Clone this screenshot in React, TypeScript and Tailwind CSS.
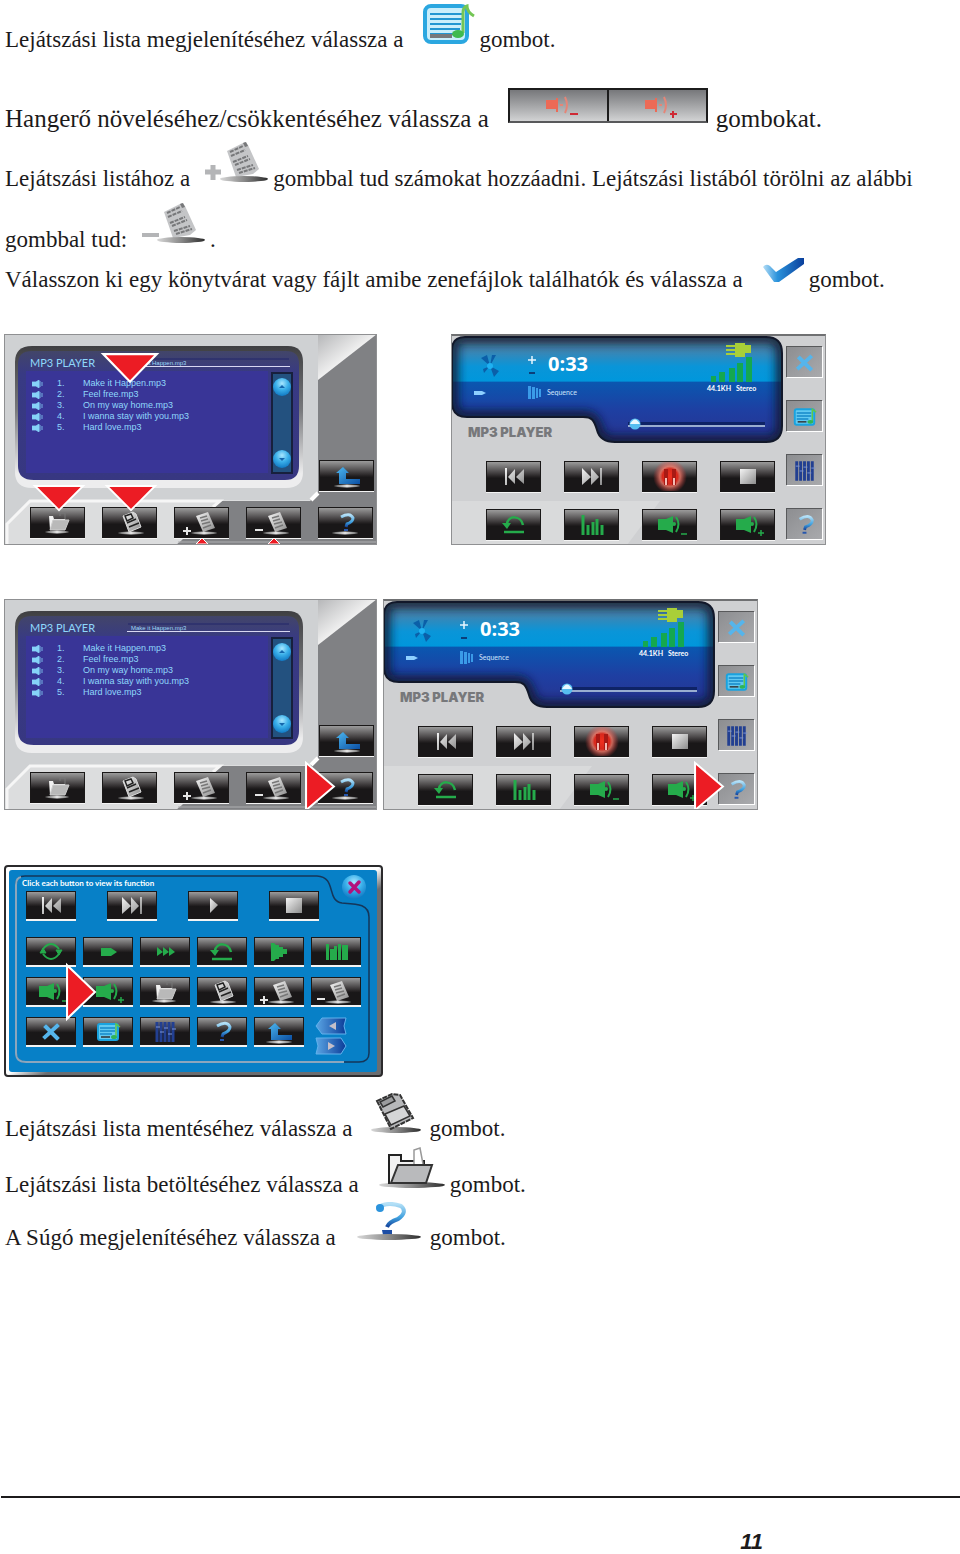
import type { ReactNode } from "react";
import clsx from "clsx";

const TRACKS = [
  "Make it Happen.mp3",
  "Feel free.mp3",
  "On my way home.mp3",
  "I wanna stay with you.mp3",
  "Hard love.mp3",
];

type GlyphName =
  | "prev" | "next" | "play" | "pause" | "stop"
  | "repeat" | "levels" | "volDown" | "volUp"
  | "loop" | "single" | "all" | "fade" | "blocks"
  | "folder" | "disk" | "pageAdd" | "pageRemove"
  | "close" | "list" | "eq" | "help" | "question" | "back";

const LABELS: Record<GlyphName, string> = {
  prev: "Előző", next: "Következő", play: "Lejátszás", pause: "Szünet", stop: "Leállítás",
  repeat: "Ismétlés", levels: "Szintek", volDown: "Hangerő le", volUp: "Hangerő fel",
  loop: "Újra", single: "Egy szám", all: "Összes", fade: "Halkítás", blocks: "Oszlopok",
  folder: "Lista betöltése", disk: "Lista mentése", pageAdd: "Hozzáadás", pageRemove: "Törlés",
  close: "Bezárás", list: "Lejátszási lista", eq: "Hangszínszabályzó", help: "Súgó", question: "Súgó",
  back: "Vissza",
};

const DISPLAY_PATH =
  "M14 3H315Q331 3 331 19V92Q331 108 315 108H164Q149 108 146 96C143 86 141 83 132 83H16Q1 83 1 68V16Q1 3 14 3Z";

// shared gradients, referenced by every drawing on the page
function SharedDefs() {
  return (
    <svg width="0" height="0" className="absolute" aria-hidden="true">
      <defs>
        <linearGradient id="silver" x1="0" y1="0" x2="1" y2="1">
          <stop offset="0" stopColor="#f4f4f4" />
          <stop offset="1" stopColor="#8c8c8c" />
        </linearGradient>
        <linearGradient id="shade" x1="0" y1="0" x2="1" y2="0">
          <stop offset="0" stopColor="#d8d8d8" />
          <stop offset=".5" stopColor="#8a8a8a" />
          <stop offset="1" stopColor="#2c2c2c" />
        </linearGradient>
        <linearGradient id="base" x1="0" y1="0" x2="1" y2="0">
          <stop offset="0" stopColor="#555" />
          <stop offset=".5" stopColor="#e6e6e6" />
          <stop offset="1" stopColor="#666" />
        </linearGradient>
        <linearGradient id="blueArrow" x1="0" y1="0" x2="1" y2="1">
          <stop offset="0" stopColor="#4db8f0" />
          <stop offset="1" stopColor="#0b4fa3" />
        </linearGradient>
        <linearGradient id="tick" x1="0" y1="0" x2="1" y2="0">
          <stop offset="0" stopColor="#b5def6" />
          <stop offset=".35" stopColor="#2a93dc" />
          <stop offset="1" stopColor="#0a3f9c" />
        </linearGradient>
        <linearGradient id="question" x1="0" y1="0" x2="0" y2="1">
          <stop offset="0" stopColor="#b4e0f7" />
          <stop offset=".6" stopColor="#3fa0de" />
          <stop offset="1" stopColor="#12419a" />
        </linearGradient>
        <linearGradient id="corner" x1="0" y1="0" x2="1" y2="1">
          <stop offset="0" stopColor="#b5b6b8" />
          <stop offset=".5" stopColor="#f0f0f0" />
        </linearGradient>
        <linearGradient id="frame" x1="0" y1="0" x2="0" y2="1">
          <stop offset="0" stopColor="#3f3f42" />
          <stop offset=".45" stopColor="#77787b" />
          <stop offset=".9" stopColor="#ededee" />
        </linearGradient>
        <linearGradient id="navy" x1="0" y1="0" x2="0" y2="1">
          <stop offset="0" stopColor="#424569" />
          <stop offset=".18" stopColor="#383a84" />
          <stop offset="1" stopColor="#373781" />
        </linearGradient>
        <linearGradient id="display" x1="0" y1="0" x2="0" y2="1">
          <stop offset="0" stopColor="#5b7f98" />
          <stop offset=".14" stopColor="#3a86b5" />
          <stop offset=".28" stopColor="#0a95d8" />
          <stop offset=".42" stopColor="#0097dc" />
          <stop offset=".43" stopColor="#0a57b0" />
          <stop offset=".7" stopColor="#1e3fa2" />
          <stop offset="1" stopColor="#28338f" />
        </linearGradient>
        <radialGradient id="ball" cx=".5" cy=".3" r=".7">
          <stop offset="0" stopColor="#a8e6ff" />
          <stop offset=".5" stopColor="#3bb0ea" />
          <stop offset="1" stopColor="#1179c4" />
        </radialGradient>
        <radialGradient id="glow">
          <stop offset="0" stopColor="#f0301f" />
          <stop offset=".45" stopColor="#d8281c" />
          <stop offset=".6" stopColor="#f07a6a" stopOpacity=".8" />
          <stop offset="1" stopColor="#c33" stopOpacity="0" />
        </radialGradient>
        <linearGradient id="tab" x1="0" y1="0" x2="1" y2="0">
          <stop offset="0" stopColor="#5aa5e4" />
          <stop offset="1" stopColor="#0b3c98" />
        </linearGradient>
        <filter id="soft" x="-10%" y="-10%" width="120%" height="120%">
          <feGaussianBlur stdDeviation="5" />
        </filter>
        <clipPath id="displayClip">
          <path d={DISPLAY_PATH} />
        </clipPath>
      </defs>
    </svg>
  );
}

function Speaker({ sign }: { sign: "minus" | "plus" }) {
  return (
    <>
      <path d="M8 9h8l7-3v17l-7-3H8z" fill="#25ab4b" />
      <circle cx="24" cy="14" r="2" fill="#25ab4b" />
      <path d="M26 7q5 7 0 15" stroke="#25ab4b" strokeWidth="2" fill="none" />
      <path d={sign === "plus" ? "M30 23h6M33 20v6" : "M31 24h6"} stroke="#25ab4b" strokeWidth="1.500" />
    </>
  );
}

function Page() {
  return (
    <g>
      <path d="M14 8 26 4l7 16-12 4z" fill="url(#silver)" />
      <path d="m18 10 7-2m-6 5 7-2m-6 5 8-2m-7 6 8-3" stroke="#777" strokeWidth="1.500" />
      <ellipse cx="22" cy="25" rx="13" ry="1.500" fill="url(#base)" />
    </g>
  );
}

const GLYPHS: Record<GlyphName, ReactNode> = {
  prev: <path d="M11 6h2v17h-2zM21 7v15l-7-7zM30 7v15l-8-7z" fill="url(#silver)" />,
  next: <path d="M10 6v17l9-8zM19 6v17l8-8zM28 6h2v17h-2z" fill="url(#silver)" />,
  play: <path d="M17 7v15l8-8z" fill="url(#silver)" />,
  pause: (
    <>
      <circle cx="20" cy="14.500" r="17" fill="url(#glow)" />
      <path d="M14 7h4v16h-4zM22 7h4v16h-4z" fill="#a81914" />
      <path d="M15 16h2v7h-2zM23 16h2v7h-2z" fill="#f4bcb4" />
    </>
  ),
  stop: <path d="M12 7h16v15H12z" fill="url(#silver)" />,
  repeat: (
    <>
      <path d="M29 15C27 5 14 5 13 14" stroke="#25ab4b" strokeWidth="2.500" fill="none" />
      <path d="M8 13h9l-4 6z" fill="#25ab4b" />
      <path d="M10 22h20" stroke="#25ab4b" strokeWidth="2.500" />
    </>
  ),
  levels: (
    <path d="M11 5v20M16 15v10M21 12v13M25 9v16M30 15v10" stroke="#25ab4b" strokeWidth="3" />
  ),
  volDown: <Speaker sign="minus" />,
  volUp: <Speaker sign="plus" />,
  loop: (
    <g stroke="#25ab4b" strokeWidth="2" fill="none">
      <path d="M12 12q8-10 16 0M28 17q-8 10-16 0" />
      <path d="m9 16 3-5 3 5zM25 13l3 5 3-5z" fill="#25ab4b" strokeWidth="1" />
    </g>
  ),
  single: <path d="M13 11h10l6 4-6 4H13z" fill="#25ab4b" />,
  all: <path d="M12 10v9l6-4zM18 10v9l6-4zM24 10v9l6-4z" fill="#25ab4b" />,
  fade: <path d="M12 6h3l2 2h3v2h4v2h4v5h-4v3h-4v2h-3l-2 2h-3z" fill="#25ab4b" />,
  blocks: <path d="M10 7h3v16h-3zM14 12h6v11h-6zM18 9h3v14h-3zM22 7h3v16h-3zM26 8h6v15h-6z" fill="#25ab4b" />,
  folder: (
    <>
      <path d="M22 8V5h5v7" fill="none" stroke="#777" />
      <path d="M11 8h4l1 3h11v11H12z" fill="#f1f1f1" />
      <path d="M15 12h16l-4 10H12z" fill="#b9b9b9" stroke="#ccc" />
      <ellipse cx="19" cy="24" rx="12" ry="1.500" fill="url(#base)" />
    </>
  ),
  disk: (
    <>
      <path d="m13 8 10-4 3 2 5 13-12 5z" fill="url(#silver)" stroke="#ddd" />
      <path d="m15 8 6-2 2 4-6 3zM17 15l9-4M19 19l10-4" fill="none" stroke="#222" strokeWidth="1.500" />
      <ellipse cx="21" cy="25" rx="13" ry="1.500" fill="url(#base)" />
    </>
  ),
  pageAdd: (
    <>
      <Page />
      <path d="M1 23h8M5 19v8" stroke="#e6e6e6" strokeWidth="2" />
    </>
  ),
  pageRemove: (
    <>
      <Page />
      <path d="M1 22h8" stroke="#e6e6e6" strokeWidth="2" />
    </>
  ),
  close: <path d="M15 10 26 21M26 9 14 20" stroke="#55b5ec" strokeWidth="4" strokeLinecap="square" />,
  list: (
    <>
      <rect x="10" y="7" width="20" height="16" rx="2" fill="#62c9f1" stroke="#19a3df" strokeWidth="2" />
      <path d="M12 11h15M12 14h15M12 17h12" stroke="#1689c9" strokeWidth="1.500" />
      <path d="M13 20h9" stroke="#333" strokeWidth="1.500" />
      <path d="M28 19V7l4 3" stroke="#5fc847" strokeWidth="1.500" fill="none" />
      <ellipse cx="26" cy="20" rx="3" ry="2" fill="#2fb457" />
    </>
  ),
  eq: (
    <>
      <path d="M12 5v20M16 5v20M20 5v20M24 5v20M28 5v20" stroke="#223f91" strokeWidth="3" />
      <path d="M11 10h4m0 5h4m0-4h4m0 6h4m0-5h4" stroke="#7a94d6" />
    </>
  ),
  question: (
    <>
      <path d="M15 9Q25 3 28 10Q28 14 21 17L20 20" stroke="url(#question)" strokeWidth="3" fill="none" />
      <path d="M18 22h4v2h-4z" fill="#2757ad" />
    </>
  ),
  help: (
    <>
      <path d="M15 9Q24 4 27 10Q27 14 21 16L20 19" stroke="url(#question)" strokeWidth="3" fill="none" />
      <path d="M18 21h4v2h-4z" fill="#2757ad" />
      <ellipse cx="19" cy="25" rx="13" ry="1.500" fill="url(#base)" />
    </>
  ),
  back: (
    <>
      <path d="m16 6 6 6h-3v6h14v5H12V12H9z" fill="url(#blueArrow)" />
      <ellipse cx="20" cy="25" rx="13" ry="1.500" fill="url(#base)" />
    </>
  ),
};

function Key({ name, small }: { name: GlyphName; small?: boolean }) {
  return (
    <button
      type="button"
      aria-label={LABELS[name]}
      className={clsx(
        "flex shrink-0 items-center justify-center overflow-hidden border border-[#1a1818] bg-[linear-gradient(180deg,#9b9b9b_0%,#4a4748_35%,#262324_50%,#191718_56%,#191718_100%)]",
        small ? "h-[28px] w-[50px] shadow-[0_2px_0_#f4f4f4]" : "h-[31px] w-[55px] shadow-[0_1px_0_#f4f4f4]",
      )}
    >
      <svg width="40" height="29" viewBox="0 0 40 29">{GLYPHS[name]}</svg>
    </button>
  );
}

function SideKey({ name }: { name: GlyphName }) {
  return (
    <button
      type="button"
      aria-label={LABELS[name]}
      className="flex h-[31px] w-9 items-center justify-center overflow-hidden border-t border-l border-[#58595b] bg-linear-to-br from-[#8d8e91] to-[#a9aaad] shadow-[1px_1px_0_#fff]"
    >
      <svg width="36" height="29" viewBox="2 0 36 29">{GLYPHS[name]}</svg>
    </button>
  );
}

// red pointer laid over a figure
function Pointer({ dir, className }: { dir: "down" | "right"; className: string }) {
  return (
    <svg
      viewBox={dir === "down" ? "0 0 56 28" : "0 0 30 56"}
      preserveAspectRatio="none"
      className={clsx("pointer-events-none absolute", className)}
      aria-hidden="true"
    >
      <path
        d={dir === "down" ? "M3 1H53L28 26Z" : "M1 3V53L28 28Z"}
        fill="#ec1c24"
        stroke="#fff"
        strokeWidth="2"
      />
    </svg>
  );
}

function ListPlayer({ children }: { children?: ReactNode }) {
  return (
    <div className="relative isolate h-[211px] w-[373px] shrink-0 overflow-hidden border border-[#8f9092] bg-[#cfd1d3]">
      <svg width="371" height="209" viewBox="1 1 371 209" className="absolute inset-0 -z-10" aria-hidden="true">
        <path d="M3 211V189L26 166H314V211Z" fill="#dcddde" />
        <path d="M314 0H373V211H172L178 206L209 173L217 167H306L314 160Z" fill="#808184" />
        <path d="M314 0H373L314 46Z" fill="url(#corner)" />
        <path d="M3 211V190L26 167H216L209 173" fill="none" stroke="#f6f6f6" strokeWidth="3" />
        <path d="M307 166L314 159" stroke="#fff" strokeWidth="4" />
        <path d="M174 208H372" stroke="#b0b1b3" />
        <path d="M28 12H284Q299 12 299 28V138Q299 154 282 154H28Q11 154 11 138V28Q11 12 28 12Z" fill="url(#frame)" />
        <path d="M28 17H282Q295 17 295 30V132Q295 146 281 146H30Q14 146 14 132V30Q14 17 28 17Z" fill="url(#navy)" />
        <path d="M22 37H264V139H22Z" fill="#393597" />
        <path d="M124 25H285" stroke="#23266b" />
      </svg>
      <div className="flex h-[154px] flex-col pt-[18px] pl-[25px]">
        <div className="flex h-5 items-center">
          <h3 className="w-[97px] font-['Lato'] text-[11px] leading-5 text-[#8fd8fb]">MP3 PLAYER</h3>
          <div className="flex h-[7px] w-[163px] items-center border-b border-[#d8d8f2] pl-1">
            <span className="font-['Liberation_Sans'] text-[6px] leading-[6px] text-[#9fd9f8]">Make it Happen.mp3</span>
          </div>
        </div>
        <div className="flex">
          <ol className="w-[241px] pt-[5px] font-['Liberation_Sans'] text-[9px] leading-[11px] text-[#8fd8fb]">
            {TRACKS.map((track, i) => (
              <li key={track} className="flex items-center">
                <svg width="12" height="8" viewBox="0 0 12 8" className="ml-[2px]" aria-hidden="true">
                  <path d="M0 2h4l3-2v8L4 6H0zM8 1v6M10 2v4" fill="#86d3f8" stroke="#86d3f8" strokeWidth=".8" />
                </svg>
                <span className="ml-[13px] w-[26px]">{i + 1}.</span>
                <span>{track}</span>
              </li>
            ))}
          </ol>
          <div className="-mt-px flex h-[102px] w-[22px] flex-col items-center justify-between border-2 border-[#17203d] bg-[#23517f] py-1">
            {["Fel", "Le"].map((label) => (
              <button key={label} type="button" aria-label={label} className="h-[18px] w-[18px]">
                <svg width="18" height="18" viewBox="0 0 18 18">
                  <circle cx="9" cy="9" r="9" fill="url(#ball)" />
                  <path d={label === "Fel" ? "M6 10 9 7l3 3z" : "M6 8l3 3 3-3z"} fill="#1467ad" />
                </svg>
              </button>
            ))}
          </div>
        </div>
      </div>
      <div className="-mt-[29px] flex justify-end pr-[2px]">
        <Key name="back" />
      </div>
      <div className="mt-4 flex gap-[17px] pl-[25px]">
        <Key name="folder" />
        <Key name="disk" />
        <Key name="pageAdd" />
        <Key name="pageRemove" />
        <Key name="help" />
      </div>
      {children}
    </div>
  );
}

function Display() {
  return (
    <div className="h-[108px] w-[332px]">
      <div className="flex h-[46px]">
        <svg width="92" height="46" viewBox="0 0 92 46" aria-hidden="true">
          <g fill="#0b5fa8">
            <path d="M38 30 29 22l6-3zM38 30l2-11h4zM38 30l9 5-5 6zM38 30l-7 3 1 4z" />
          </g>
          <circle cx="38" cy="30" r="3" fill="#1fb1f2" />
          <path d="M76 24h8M80 20v8" stroke="#e8f6ff" strokeWidth="1.500" />
          <path d="M77 37h6" stroke="#0b3f7a" strokeWidth="2" />
        </svg>
        <span className="mt-[14px] w-[160px] pl-1 font-['Open_Sans'] text-[20px] leading-7 font-bold text-white">0:33</span>
        <svg width="60" height="48" viewBox="252 0 60 48" aria-hidden="true">
          <path d="M274 9h9v-2h10v2h6v8h-6v4h-10v-2h-9v-2h9v-2h-9v-2h9v-2h-9z" fill="#a9cf38" />
          <path d="M259 40h5v6h-5zM267 36h6v10h-6zM277 32h6v14h-6zM285 27h6v19h-6zM294 21h6v25h-6z" fill="#14a850" />
        </svg>
      </div>
      <div className="flex h-5 font-['Lato'] text-[7px] leading-5 text-[#cfe5fb]">
        <svg width="95" height="20" viewBox="0 0 95 20" aria-hidden="true">
          <path d="M22 9h8l4 2-4 2h-8z" fill="#8ed0ff" />
          <path d="M76 4h3v13h-3zM80 5h3v12h-3zM84 6h2v10h-2zM87 7h2v8h-2z" fill="#3a9be8" />
        </svg>
        <span className="w-40">Sequence</span>
        <span className="-mt-1 flex gap-[5px] font-bold text-white"><span>44.1KH</span><span>Stereo</span></span>
      </div>
      <svg width="332" height="42" viewBox="0 66 332 42" aria-hidden="true">
        <path d="M176 88.500H313" stroke="#0e2366" strokeWidth="5" />
        <path d="M176 90H313" stroke="#c8dcf4" strokeWidth="1.500" />
        <circle cx="183" cy="88" r="5.500" fill="#56bdf0" />
        <path d="M178 88q5-9 10 0z" fill="#e9f8ff" />
      </svg>
    </div>
  );
}

function TrackPlayer({ children }: { children?: ReactNode }) {
  return (
    <div className="relative isolate h-[211px] w-[375px] shrink-0 overflow-hidden border border-t-2 border-[#8f9092] border-t-[#6f7072] bg-[#cfd0d2]">
      <svg width="373" height="208" viewBox="1 2 373 208" className="absolute inset-0 -z-10" aria-hidden="true">
        <path d="M0 167H209L176 211H0Z" fill="#d9dadb" />
        <path d={DISPLAY_PATH} fill="url(#display)" />
        <g clipPath="url(#displayClip)">
          <path d={DISPLAY_PATH} fill="none" stroke="#101a30" strokeOpacity=".85" strokeWidth="13" filter="url(#soft)" />
        </g>
        <path d={DISPLAY_PATH} fill="none" stroke="#12182a" strokeWidth="2" />
      </svg>
      <div className="flex">
        <div className="w-[334px]">
          <Display />
          <h3 className="-mt-5 pl-4 font-['Inter'] text-[13px] leading-4 font-black text-[#77787b]">MP3 PLAYER</h3>
          <div className="mt-[21px] grid w-max grid-cols-4 gap-x-[23px] gap-y-[17px] pl-[34px]">
            <Key name="prev" />
            <Key name="next" />
            <Key name="pause" />
            <Key name="stop" />
            <Key name="repeat" />
            <Key name="levels" />
            <Key name="volDown" />
            <Key name="volUp" />
          </div>
        </div>
        <div className="flex flex-col gap-[23px] pt-[10px]">
          <SideKey name="close" />
          <SideKey name="list" />
          <SideKey name="eq" />
          <SideKey name="question" />
        </div>
      </div>
      {children}
    </div>
  );
}

const HELP_ROWS: GlyphName[][] = [
  ["loop", "single", "all", "repeat", "fade", "blocks"],
  ["volDown", "volUp", "folder", "disk", "pageAdd", "pageRemove"],
  ["close", "list", "eq", "question", "back"],
];

function HelpPanel() {
  return (
    <div className="relative isolate h-[212px] w-[379px] rounded-[4px] border-2 border-[#2b2a2c] bg-linear-to-br from-white from-50% to-[#6b6d70] to-55% p-[3px]">
      <svg width="379" height="212" viewBox="0 0 379 212" className="absolute -top-[2px] -left-[2px] -z-10" aria-hidden="true">
        <rect x="5" y="5" width="368" height="202" rx="3" fill="#0780c7" />
        <path d="M12 188V20Q12 11 21 11H313C333 12 322 36 338 38C353 39 365 39 365 52V188Q365 197 355 197H22Q12 197 12 188Z" fill="none" stroke="#15365a" strokeWidth="1.500" />
        <path d="M340 197H22Q12 197 12 188V20Q12 13 17 12" fill="none" stroke="#8ba6bd" strokeWidth="2" />
      </svg>
      <div className="flex h-[21px] items-start justify-between pl-[13px]">
        <h3 className="pt-[7px] font-['Lato'] text-[8px] leading-3 font-bold whitespace-nowrap text-white">Click each button to view its function</h3>
        <button type="button" aria-label="Bezárás" className="mt-[5px] mr-3 h-6 w-6">
          <svg width="24" height="24" viewBox="0 0 24 24">
            <circle cx="12" cy="12" r="12" fill="url(#ball)" />
            <path d="m8 8 9 9M17 7l-9 10" stroke="#b3127c" strokeWidth="3.500" strokeLinecap="round" />
          </svg>
        </button>
      </div>
      <div className="flex gap-[31px] pl-[17px]">
        <Key name="prev" small />
        <Key name="next" small />
        <Key name="play" small />
        <Key name="stop" small />
      </div>
      <div className="mt-[18px] flex flex-col gap-3 pl-[17px]">
        {HELP_ROWS.map((row) => (
          <div key={row[0]} className="flex h-7 gap-[7px]">
            {row.map((name) => (
              <Key key={name} name={name} small />
            ))}
            {row.length < 6 && (
              <div className="flex flex-col gap-[2px] pl-1">
                <button type="button" aria-label="Előző oldal" className="h-[18px] w-8">
                  <svg width="32" height="18" viewBox="0 0 32 18">
                    <path d="M7 1H31L29 9L31 17H7L1 9Z" fill="url(#tab)" stroke="#62b2ec" />
                    <path d="m14 9 7-4v8z" fill="#c5bfc9" />
                  </svg>
                </button>
                <button type="button" aria-label="Következő oldal" className="h-[18px] w-8">
                  <svg width="32" height="18" viewBox="0 0 32 18">
                    <path d="M1 1H26L31 9L26 17H1L3 9Z" fill="url(#tab)" stroke="#62b2ec" />
                    <path d="m20 9-7-4v8z" fill="#c5bfc9" />
                  </svg>
                </button>
              </div>
            )}
          </div>
        ))}
      </div>
      <Pointer dir="right" className="top-[95px] left-[60px] h-[60px] w-[31px]" />
    </div>
  );
}

function ListIcon() {
  return (
    <svg width="56" height="41" viewBox="0 0 56 41" role="img" aria-label="lejátszási lista">
      <rect x="3" y="3" width="42" height="36" rx="6" fill="#c9eefb" stroke="#2ba7e0" strokeWidth="4" />
      <path d="M8 11h32M8 16h32M8 21h31M8 26h30M8 31h28" stroke="#2196d2" strokeWidth="2" />
      <path d="M8 33h22" stroke="#77787a" strokeWidth="4" />
      <path d="M41 30V10q0-6 4-7 0 6 7 10" stroke="#74c655" strokeWidth="3" fill="none" />
      <ellipse cx="36" cy="31" rx="6" ry="4" fill="#3fba4f" />
    </svg>
  );
}

function SheetIcon({ add }: { add?: boolean }) {
  return (
    <svg width="64" height="42" viewBox="0 0 64 42" role="img" aria-label={add ? "hozzáadás" : "törlés"}>
      <path d="M22 10 40 1l3 3 11 24-6 5-17 3z" fill="#c4c5c7" />
      <path d="m25 11 13-6m-12 10 14-6m-12 12 15-6m-13 9 15-6m-13 11 16-5m-14 8 16-5" stroke="#77787a" strokeWidth="2" strokeDasharray="4 1" />
      <path d="m38 2 3-1 2 4-3 1z" fill="#77787a" />
      <ellipse cx="39" cy="38" rx="24" ry="3" fill="url(#shade)" />
      <path d={add ? "M0 31h16M8 24v15" : "M0 33h17"} stroke="#b4b5b7" strokeWidth={add ? 5 : 4} />
    </svg>
  );
}

function TickIcon() {
  return (
    <svg width="43" height="28" viewBox="0 0 43 28" role="img" aria-label="rendben">
      <path d="M1 11Q4 7 8 10L14 16L36 2H42V8L17 26H12Z" fill="url(#tick)" />
    </svg>
  );
}

function DiskIcon() {
  return (
    <svg width="50" height="41" viewBox="0 0 50 41" role="img" aria-label="mentés">
      <ellipse cx="25" cy="38" rx="25" ry="3" fill="url(#shade)" />
      <path d="M6 9 21 2l8 1 13 23-22 11z" fill="#b7b8ba" stroke="#333" strokeWidth="2" strokeDasharray="5 1" />
      <path d="m9 10 12-6 3 5-12 6z" fill="#9b9c9e" stroke="#333" strokeWidth="1.500" />
      <path d="m14 22 19-8 6 10-19 9z" fill="#d5d6d7" stroke="#333" strokeWidth="1.500" />
    </svg>
  );
}

function FolderIcon() {
  return (
    <svg width="68" height="42" viewBox="0 0 68 42" role="img" aria-label="betöltés">
      <ellipse cx="34" cy="38" rx="33" ry="3" fill="url(#shade)" />
      <path d="M11 37V8h12v6h23v5" fill="#f1f1f1" stroke="#222" strokeWidth="2" />
      <path d="M36 18V3l6-2 3 16" fill="#fff" stroke="#999" strokeWidth="1.500" />
      <path d="M20 18h34l-6 18H13z" fill="#b9babc" stroke="#333" strokeWidth="2" />
    </svg>
  );
}

function HelpIcon() {
  return (
    <svg width="65" height="40" viewBox="0 0 65 40" role="img" aria-label="súgó">
      <path d="M20 6Q30-1 44 4Q51 10 41 17Q32 20 30 25" fill="none" stroke="url(#question)" strokeWidth="4" />
      <circle cx="23" cy="6" r="4" fill="#2b93dc" />
      <path d="M25 28h10v5H26z" fill="#1c4da5" />
      <ellipse cx="32" cy="35" rx="32" ry="3" fill="url(#shade)" />
    </svg>
  );
}

function VolumeKeys() {
  return (
    <span className="flex h-[35px] w-[200px] divide-x-2 divide-[#1c1c1c] border-2 border-[#1c1c1c] border-b-[#58595b]">
      {["−", "+"].map((sign) => (
        <button
          key={sign}
          type="button"
          aria-label={`Hangerő ${sign}`}
          className="flex flex-1 items-center justify-center bg-linear-to-b from-[#77787b] to-[#d2d3d4] pl-2"
        >
          <svg width="36" height="24" viewBox="0 0 36 24">
            <path d="M2 6h10V4h2v14h-2v-3H2z" fill="#ec6a56" />
            <path d="M16 11h3M21 3q4 8 0 16" stroke="#e58577" strokeWidth="2" fill="none" />
            <path d={sign === "+" ? "M27 20h7M30 17v7" : "M26 20h8"} stroke="#cf2a35" strokeWidth="2" />
          </svg>
        </button>
      ))}
    </span>
  );
}

function Line({ className, children }: { className: string; children: ReactNode }) {
  return <div className={clsx("flex items-end pl-px whitespace-nowrap", className)}>{children}</div>;
}

export default function App() {
  return (
    <main className="w-full bg-white font-['Liberation_Serif',serif] text-[23px] leading-6 text-[#1c1a1b]">
      <SharedDefs />
      <div className="pl-1">
        <Line className="h-[52px]">
          <span>Lejátszási lista megjelenítéséhez válassza a</span>
          <span className="mr-px mb-2 ml-[19px]"><ListIcon /></span>
          <span>gombot.</span>
        </Line>
        <Line className="h-[79px] text-[25px]">
          <span>Hangerő növeléséhez/csökkentéséhez válassza a</span>
          <span className="mr-2 mb-2 ml-[19px]"><VolumeKeys /></span>
          <span>gombokat.</span>
        </Line>
        <Line className="h-[60px]">
          <span>Lejátszási listához a</span>
          <span className="mr-1 mb-2 ml-[15px]"><SheetIcon add /></span>
          <span>gombbal tud számokat hozzáadni. Lejátszási listából törölni az alábbi</span>
        </Line>
        <Line className="h-[61px]">
          <span>gombbal tud:</span>
          <span className="mr-1 mb-2 ml-[15px]"><SheetIcon /></span>
          <span>.</span>
        </Line>
        <Line className="h-10">
          <span>Válasszon ki egy könytvárat vagy fájlt amibe zenefájlok találhatók és válassza a</span>
          <span className="mr-1 mb-2 ml-[19px]"><TickIcon /></span>
          <span>gombot.</span>
        </Line>

        <div className="mt-[42px] flex gap-[74px]">
          <ListPlayer>
            <Pointer dir="down" className="top-[18px] left-[95px] h-[31px] w-[60px]" />
            <Pointer dir="down" className="top-[150px] left-[27px] h-[27px] w-[54px]" />
            <Pointer dir="down" className="top-[150px] left-[99px] h-[27px] w-[54px]" />
            <svg width="84" height="8" viewBox="0 0 84 8" className="absolute bottom-0 left-[191px]" aria-hidden="true">
              <path d="M0 8 6 2l6 6zM72 8l6-6 6 6z" fill="#ec1c24" stroke="#fff" />
            </svg>
          </ListPlayer>
          <TrackPlayer />
        </div>

        <div className="mt-[54px] flex gap-[6px]">
          <ListPlayer>
            <Pointer dir="right" className="top-[160px] left-[300px] h-[53px] w-[31px]" />
          </ListPlayer>
          <TrackPlayer>
            <Pointer dir="right" className="top-[159px] left-[310px] h-[53px] w-[31px]" />
          </TrackPlayer>
        </div>

        <div className="mt-[55px]">
          <HelpPanel />
        </div>

        <Line className="h-[64px]">
          <span>Lejátszási lista mentéséhez válassza a</span>
          <span className="mr-2 mb-2 ml-[19px]"><DiskIcon /></span>
          <span>gombot.</span>
        </Line>
        <Line className="h-14">
          <span>Lejátszási lista betöltéséhez válassza a</span>
          <span className="mr-1 mb-2 ml-[19px]"><FolderIcon /></span>
          <span>gombot.</span>
        </Line>
        <Line className="h-[53px]">
          <span>A Súgó megjelenítéséhez válassza a</span>
          <span className="mr-2 mb-2 ml-[21px]"><HelpIcon /></span>
          <span>gombot.</span>
        </Line>
      </div>

      <footer className="mt-[246px] ml-px border-t-2 border-[#1c1a1b] pt-8 pr-[197px] text-right font-['Liberation_Sans'] text-[22px] leading-6 font-bold italic">
        11
      </footer>
    </main>
  );
}
